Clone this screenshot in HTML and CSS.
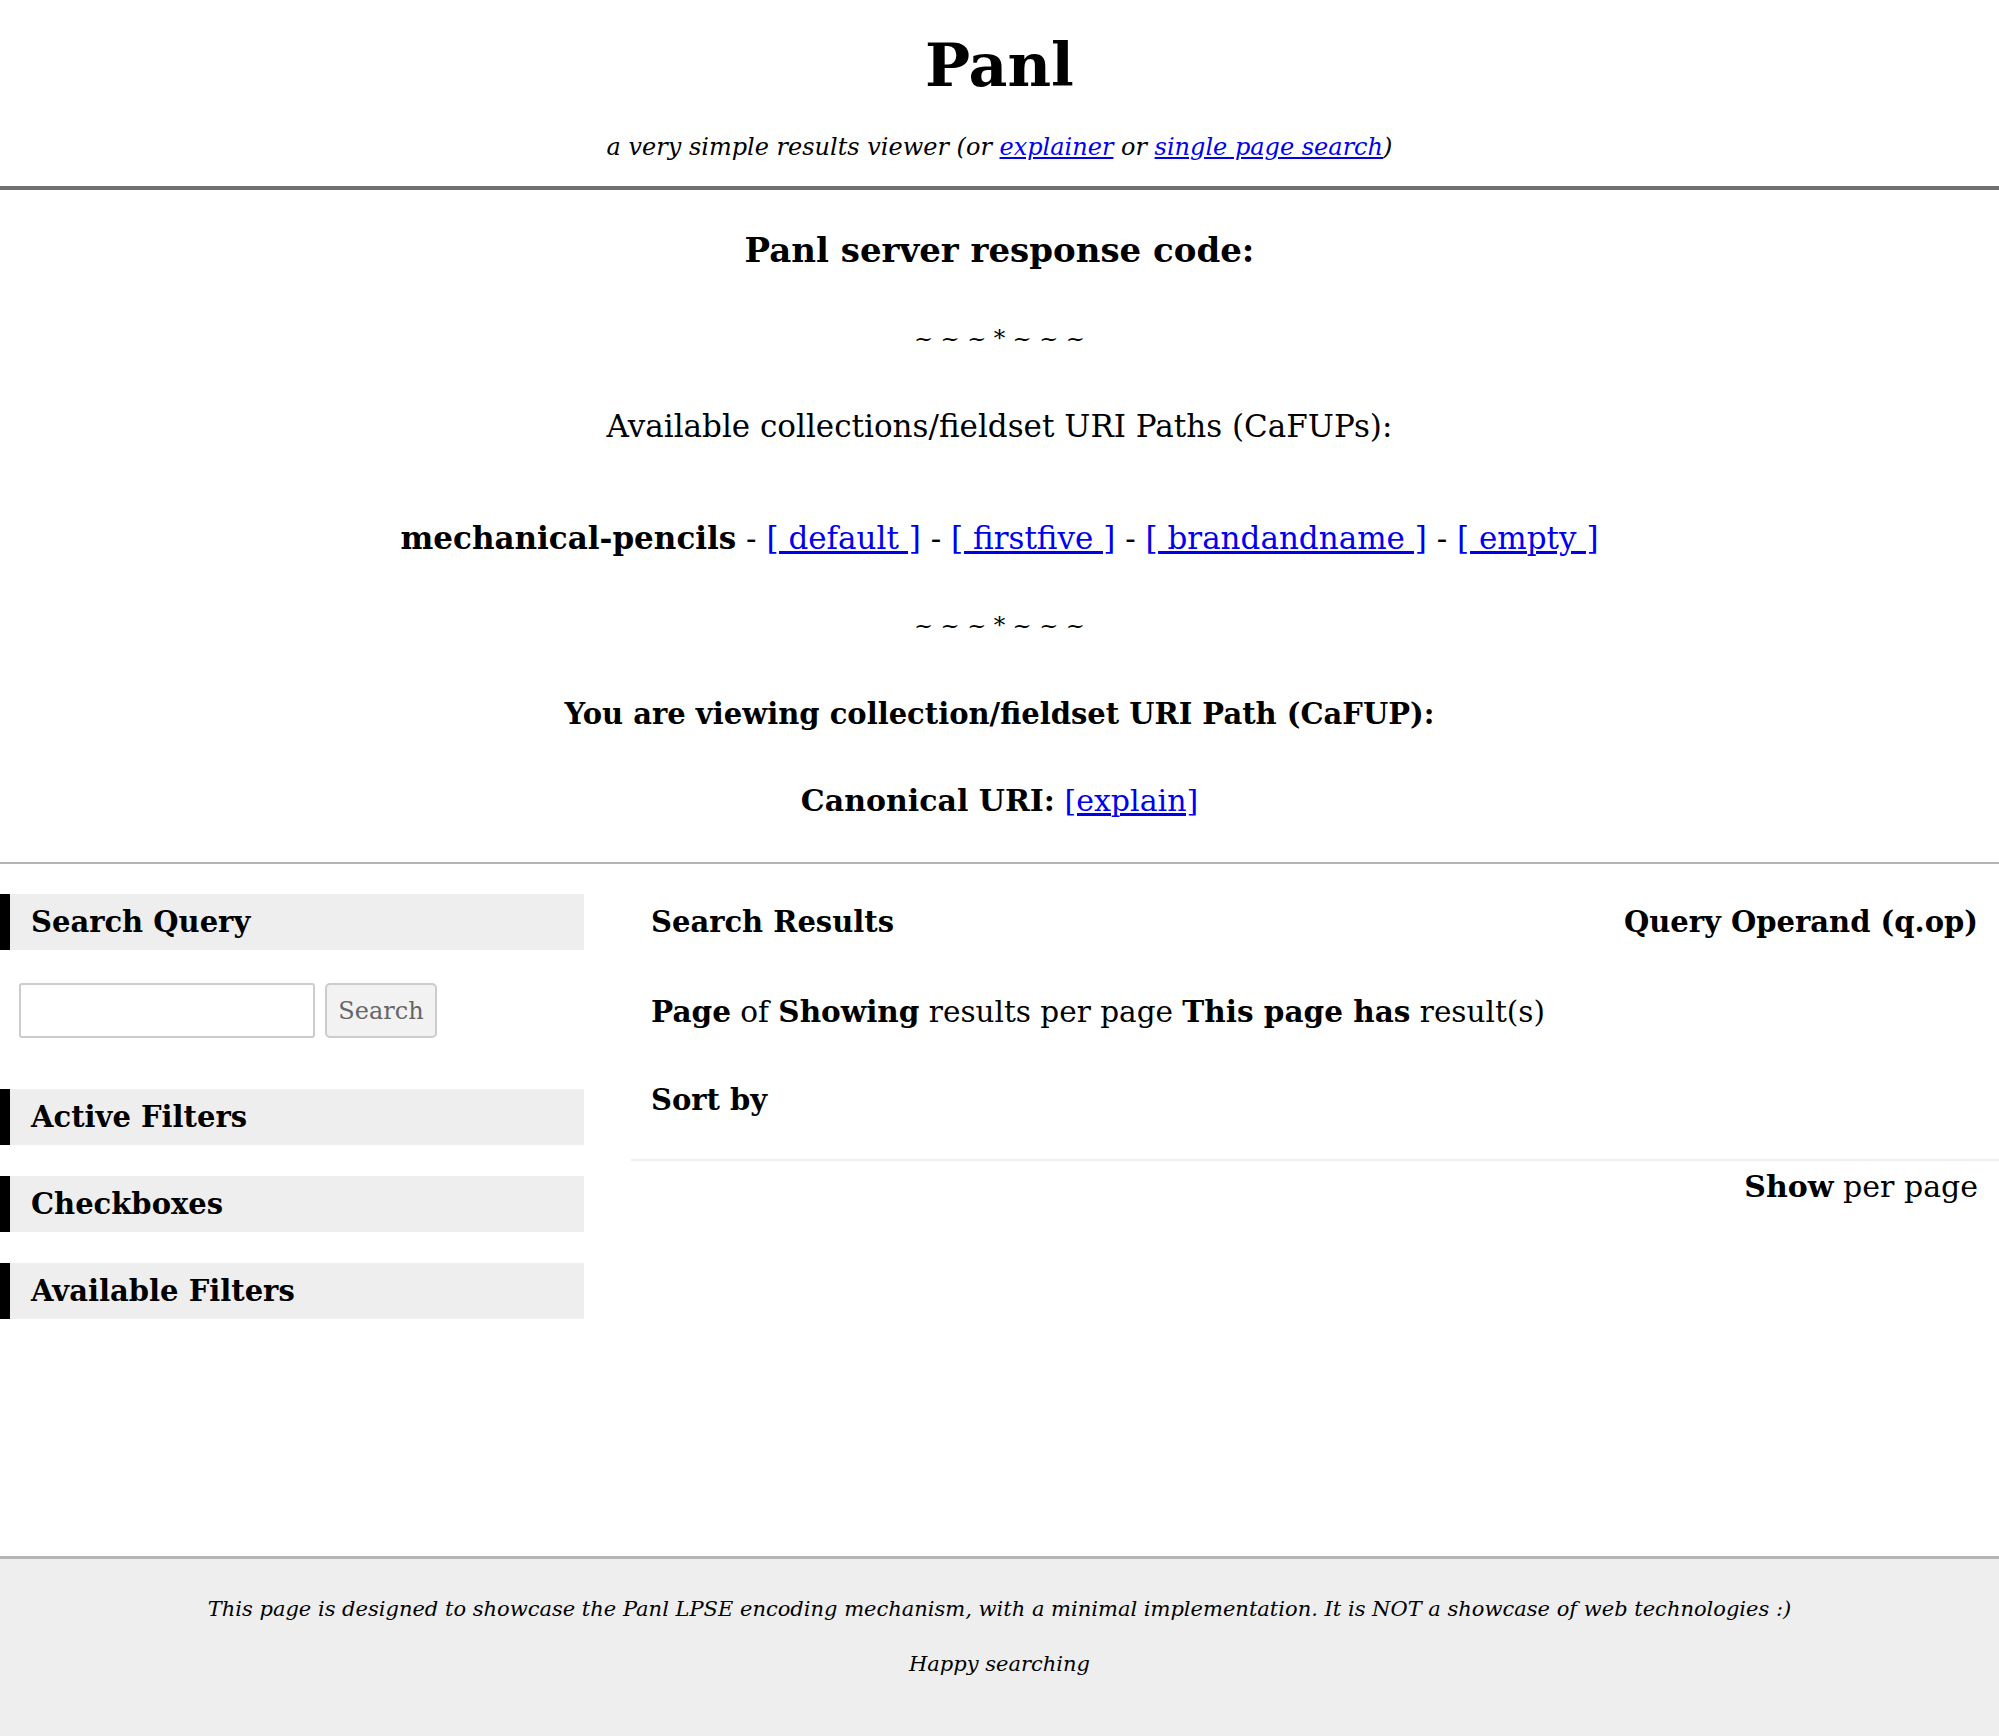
FILE: index.html
```html
<!DOCTYPE html>
<html lang="en">
<head>
<meta charset="utf-8">
<title>Panl</title>
<link rel="stylesheet" href="styles.css">
</head>
<body>
<header class="masthead">
  <h1 class="title">Panl</h1>
  <p class="subtitle">a very simple results viewer (or <a href="#">explainer</a> or <a href="#">single page search</a>)</p>
</header>
<section class="status">
  <h2 class="status-heading">Panl server response code:</h2>
  <p class="divider">~ ~ ~ * ~ ~ ~</p>
  <p class="status-text">Available collections/fieldset URI Paths (CaFUPs):</p>
  <p class="collections"><strong>mechanical-pencils</strong> - <a href="#">[ default ]</a> - <a href="#">[ firstfive ]</a> - <a href="#">[ brandandname ]</a> - <a href="#">[ empty ]</a></p>
  <p class="divider divider-second">~ ~ ~ * ~ ~ ~</p>
  <p class="viewing">You are viewing collection/fieldset URI Path (CaFUP):</p>
  <p class="canonical"><strong>Canonical URI:</strong> <a href="#">[explain]</a></p>
</section>
<main class="layout">
  <aside class="sidebar">
    <h3 class="panel-heading">Search Query</h3>
    <form class="search-form">
      <input class="search-input" type="text">
      <button class="search-button" type="button">Search</button>
    </form>
    <h3 class="panel-heading">Active Filters</h3>
    <h3 class="panel-heading">Checkboxes</h3>
    <h3 class="panel-heading">Available Filters</h3>
  </aside>
  <section class="results">
    <div class="results-top">
      <div class="results-row">
        <h3 class="results-heading">Search Results</h3>
        <h3 class="results-heading">Query Operand (q.op)</h3>
      </div>
      <p class="results-info"><strong>Page</strong> of <strong>Showing</strong> results per page <strong>This page has</strong> result(s)</p>
      <p class="sort-by"><strong>Sort by</strong></p>
    </div>
    <p class="per-page"><strong>Show</strong> per page</p>
  </section>
</main>
<footer class="footer">
  <p class="footer-line">This page is designed to showcase the Panl LPSE encoding mechanism, with a minimal implementation. It is NOT a showcase of web technologies :)</p>
  <p class="footer-line">Happy searching</p>
</footer>
</body>
</html>
```
FILE: styles.css
```css
html, body {
  margin: 0;
  padding: 0;
}
body {
  font-family: "DejaVu Serif", "Liberation Serif", serif;
  color: #000;
  background: #fff;
}
a {
  color: #0000ee;
}
p, h1, h2, h3 {
  margin: 0;
}

.masthead {
  text-align: center;
  padding-top: 25px;
  padding-bottom: 19px;
  border-bottom: 4px solid #707070;
}
.title {
  font-size: 60px;
  line-height: 80px;
  font-weight: bold;
}
.subtitle {
  margin-top: 22px;
  font-size: 24px;
  line-height: 40px;
  font-style: italic;
}

.status {
  text-align: center;
  padding-top: 35px;
  padding-bottom: 36px;
  border-bottom: 2px solid #b4b4b4;
}
.status p, .status h2 {
  line-height: 50px;
  font-size: 31px;
}
.status .status-heading {
  font-size: 34px;
  font-weight: bold;
}
.status .divider {
  margin-top: 38px;
  font-size: 23px;
}
.status-text {
  margin-top: 38px;
}
.status .collections {
  margin-top: 62px;
  font-size: 31px;
}
.status .divider-second {
  margin-top: 37px;
}
.status .viewing {
  margin-top: 39px;
  font-weight: bold;
  font-size: 29px;
}
.status .canonical {
  margin-top: 37px;
  font-size: 30px;
}

.layout {
  display: grid;
  grid-template-columns: 584px 1fr;
  column-gap: 47px;
  padding-top: 30px;
  min-height: 662px;
}
.sidebar {
  display: flex;
  flex-direction: column;
}
.panel-heading {
  background: #eee;
  border-left: 10px solid #000;
  padding-left: 21px;
  height: 56px;
  line-height: 56px;
  font-size: 29px;
  font-weight: bold;
  margin-bottom: 31px;
}
.search-form {
  display: flex;
  gap: 10px;
  padding-left: 19px;
  margin-top: 2px;
  margin-bottom: 51px;
}
.search-input {
  width: 296px;
  height: 55px;
  box-sizing: border-box;
  border: 2px solid #ccc;
  border-radius: 3px;
  background: #fff;
}
.search-button {
  width: 112px;
  height: 55px;
  box-sizing: border-box;
  border: 2px solid #ccc;
  border-radius: 5px;
  background: #f2f2f3;
  color: #666;
  font-family: "DejaVu Serif", serif;
  font-size: 24px;
}

.results {
  display: flex;
  flex-direction: column;
}
.results-top {
  padding: 0 21px 39px 20px;
  border-bottom: 2px solid #eee;
}
.results-row {
  display: flex;
  justify-content: space-between;
  height: 56px;
  align-items: center;
}
.results-heading {
  font-size: 29px;
  font-weight: bold;
}
.results-info {
  margin-top: 42px;
  font-size: 29.5px;
  line-height: 40px;
}
.sort-by {
  margin-top: 48px;
  font-size: 29px;
  line-height: 40px;
}
.per-page {
  text-align: right;
  padding-right: 21px;
  margin-top: 6px;
  font-size: 30px;
  line-height: 40px;
}

.footer {
  background: #eee;
  border-top: 3px solid #b4b4b4;
  text-align: center;
  padding-top: 34px;
  padding-bottom: 60px;
  font-style: italic;
  font-size: 21px;
}
.footer-line {
  line-height: 32px;
}
.footer-line + .footer-line {
  margin-top: 23px;
}
```
